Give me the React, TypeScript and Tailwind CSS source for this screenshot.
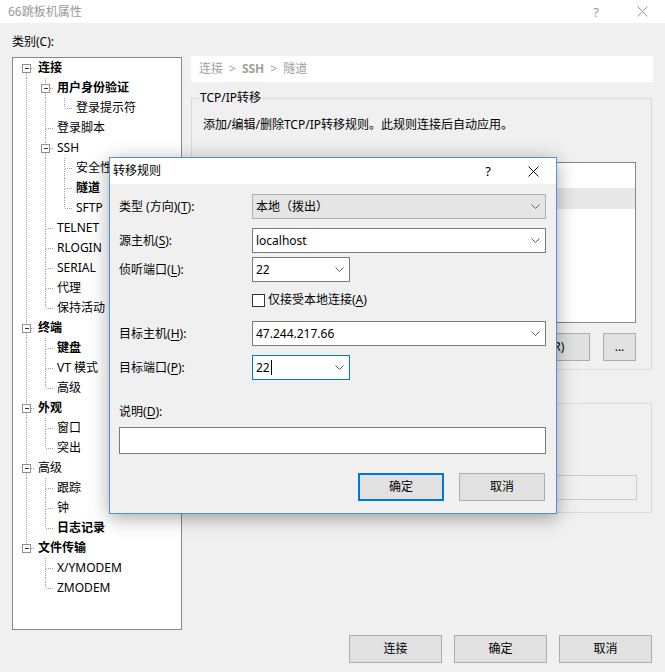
import React from "react";

type TreeNode = { label: string; bold?: boolean; children?: TreeNode[] };
type Row = { node: TreeNode; depth: number; guides: boolean[]; hasNext: boolean; first: boolean };

const tree: TreeNode[] = [
  {
    label: "连接",
    bold: true,
    children: [
      { label: "用户身份验证", bold: true, children: [{ label: "登录提示符" }] },
      { label: "登录脚本" },
      { label: "SSH", children: [{ label: "安全性" }, { label: "隧道", bold: true }, { label: "SFTP" }] },
      { label: "TELNET" },
      { label: "RLOGIN" },
      { label: "SERIAL" },
      { label: "代理" },
      { label: "保持活动" },
    ],
  },
  { label: "终端", bold: true, children: [{ label: "键盘", bold: true }, { label: "VT 模式" }, { label: "高级" }] },
  { label: "外观", bold: true, children: [{ label: "窗口" }, { label: "突出" }] },
  { label: "高级", children: [{ label: "跟踪" }, { label: "钟" }, { label: "日志记录", bold: true }] },
  { label: "文件传输", bold: true, children: [{ label: "X/YMODEM" }, { label: "ZMODEM" }] },
];

function flatten(nodes: TreeNode[], depth = 0, guides: boolean[] = [], out: Row[] = []) {
  nodes.forEach((n, i) => {
    const hasNext = i < nodes.length - 1;
    out.push({ node: n, depth, guides, hasNext, first: depth === 0 && i === 0 });
    if (n.children) flatten(n.children, depth + 1, [...guides, hasNext], out);
  });
  return out;
}

const dot = { stroke: "#a0a0a0", strokeDasharray: "1 1", shapeRendering: "crispEdges" as const };

function Guide({ on }: { on: boolean }) {
  return (
    <svg width="19" height="20" className="shrink-0">
      {on && <line x1="10.5" y1="0" x2="10.5" y2="20" {...dot} />}
    </svg>
  );
}

function Connector({ row }: { row: Row }) {
  const box = !!row.node.children;
  return (
    <svg width="19" height="20" className="shrink-0">
      {!row.first && <line x1="10.5" y1="0" x2="10.5" y2={box ? 6 : 10} {...dot} />}
      {row.hasNext && <line x1="10.5" y1={box ? 15 : 11} x2="10.5" y2="20" {...dot} />}
      <line x1={box ? 15 : 11} y1="10.5" x2="19" y2="10.5" {...dot} />
      {box && (
        <>
          <rect x="6.5" y="6.5" width="8" height="8" fill="#fff" stroke="#919191" shapeRendering="crispEdges" />
          <line x1="8.5" y1="10.5" x2="12.5" y2="10.5" stroke="#333" shapeRendering="crispEdges" />
        </>
      )}
    </svg>
  );
}

function Chevron() {
  return (
    <svg width="9" height="5" viewBox="0 0 9 5" className="shrink-0">
      <path d="M0.5 0.5 L4.5 4.5 L8.5 0.5" stroke="#606060" fill="none" />
    </svg>
  );
}

function Close({ color }: { color: string }) {
  return (
    <svg width="11" height="11" viewBox="0 0 11 11">
      <path d="M0.5 0.5 L10.5 10.5 M10.5 0.5 L0.5 10.5" stroke={color} strokeWidth="1" fill="none" />
    </svg>
  );
}

function Acc({ label, k }: { label: string; k: string }) {
  return (
    <span>
      {label}(<span className="underline underline-offset-2">{k}</span>):
    </span>
  );
}

function Combo({
  value,
  wide,
  grey,
  focus,
  caret,
}: {
  value: string;
  wide?: boolean;
  grey?: boolean;
  focus?: boolean;
  caret?: boolean;
}) {
  return (
    <div
      className={`flex h-[25px] items-center justify-between border pl-[3px] pr-[5px] ${wide ? "w-[294px]" : "w-[98px]"} ${
        grey ? "border-[#adadad] bg-[#e5e5e5]" : focus ? "border-[#0078d7] bg-white" : "border-[#7a7a7a] bg-white"
      }`}
    >
      <span className="flex items-center">
        {value}
        {caret && <span className="ml-[1px] inline-block h-[15px] w-px bg-black" />}
      </span>
      <Chevron />
    </div>
  );
}

function Btn({ label, w, primary }: { label: string; w: string; primary?: boolean }) {
  return (
    <div
      className={`flex h-[28px] items-center justify-center bg-[#e1e1e1] ${w} ${
        primary ? "border-2 border-[#0078d7]" : "border border-[#adadad]"
      }`}
    >
      {label}
    </div>
  );
}

export default function App() {
  const rows = flatten(tree);
  return (
    <div className="relative h-[672px] w-[665px] overflow-hidden bg-[#f0f0f0] font-['Noto_Sans','Noto_Sans_CJK_SC',sans-serif] text-[12px] leading-[16px] text-black">
      {/* main window title */}
      <div className="flex h-[23px] items-center bg-white">
        <span className="pl-[8px] text-[#999999]">66跳板机属性</span>
        <div className="ml-auto flex h-full">
          <div className="flex w-[46px] items-center justify-center text-[13px] text-[#999999]">?</div>
          <div className="flex w-[46px] items-center justify-center">
            <Close color="#999999" />
          </div>
        </div>
      </div>

      <div className="flex gap-[9px] px-[12px]">
        {/* category tree */}
        <div className="flex w-[170px] flex-col pt-[11px]">
          <div className="mb-[7px] h-[16px]">类别(C):</div>
          <div className="h-[573px] border border-[#828790] bg-white pl-[3px]">
            {rows.map((r, i) => (
              <div key={i} className="flex h-[20px] items-center whitespace-nowrap">
                {r.guides.map((g, j) => (
                  <Guide key={j} on={g} />
                ))}
                <Connector row={r} />
                <span className={`pl-[3px] leading-[20px] ${r.node.bold ? "font-bold" : ""}`}>{r.node.label}</span>
              </div>
            ))}
          </div>
        </div>

        {/* right page */}
        <div className="flex w-[462px] flex-col pt-[33px]">
          <div className="flex h-[26px] items-center bg-white pl-[8px] text-[#a0a0a0]">
            连接<span className="mx-[6px]">&gt;</span>
            <span className="font-bold">SSH</span>
            <span className="mx-[6px]">&gt;</span>隧道
          </div>

          <fieldset className="mt-[8px] w-[461px] border border-[#d9d9d9] pb-[8px] pl-[11px] pr-[15px]">
            <legend className="-ml-[4px] px-[1px]">TCP/IP转移</legend>
            <div className="mt-[11px] h-[16px]">添加/编辑/删除TCP/IP转移规则。此规则连接后自动应用。</div>
            <div className="mt-[29px] flex h-[161px] flex-col border border-[#828790] bg-white">
              <div className="h-[25px]" />
              <div className="h-[21px] bg-[#e8e8e8]" />
            </div>
            <div className="mt-[10px] flex justify-end gap-[13px]">
              <Btn label="添加(A)" w="w-[90px]" />
              <Btn label="编辑(E)" w="w-[90px]" />
              <Btn label="删除(R)" w="w-[90px]" />
              <Btn label="..." w="w-[33px]" />
            </div>
          </fieldset>

          <fieldset className="mt-[25px] w-[461px] border border-[#d9d9d9] pb-[12px] pl-[11px] pr-[14px]">
            <legend className="-ml-[4px] px-[1px]">X11转移</legend>
            <div className="mt-[8px] flex h-[16px] items-center gap-[4px]">
              <span className="inline-block h-[13px] w-[13px] border border-[#333] bg-white" />
              转发X11连接到(X):
            </div>
            <div className="mt-[40px] flex h-[25px] items-center">
              <span className="ml-[12px]">X DISPLAY:</span>
              <div className="ml-auto h-[25px] w-[300px] border border-[#cccccc] bg-[#f0f0f0]" />
            </div>
          </fieldset>
        </div>
      </div>

      <div className="mt-[5px] flex justify-end gap-[12px] pr-[13px]">
        <Btn label="连接" w="w-[93px]" />
        <Btn label="确定" w="w-[93px]" />
        <Btn label="取消" w="w-[93px]" />
      </div>

      {/* 转移规则 dialog */}
      <div className="absolute left-[109px] top-[157px] flex h-[357px] w-[448px] flex-col border border-[#4a93d4] bg-[#f0f0f0] shadow-[0_4px_18px_rgba(0,0,0,0.35)]">
        <div className="flex h-[26px] shrink-0 items-center bg-white">
          <span className="pl-[3px]">转移规则</span>
          <div className="ml-auto flex h-full">
            <div className="flex w-[44px] items-center justify-center text-[13px]">?</div>
            <div className="flex w-[46px] items-center justify-center">
              <Close color="#111111" />
            </div>
          </div>
        </div>

        <div className="flex flex-col pl-[9px]">
          <div className="mt-[10px] flex h-[25px] items-center">
            <div className="w-[133px]">
              类型 (方向)(<span className="underline underline-offset-2">T</span>):
            </div>
            <Combo value="本地（拨出）" wide grey />
          </div>
          <div className="mt-[9px] flex h-[25px] items-center">
            <div className="w-[133px]">
              <Acc label="源主机" k="S" />
            </div>
            <Combo value="localhost" wide />
          </div>
          <div className="mt-[4px] flex h-[25px] items-center">
            <div className="w-[133px]">
              <Acc label="侦听端口" k="L" />
            </div>
            <Combo value="22" />
          </div>
          <div className="mt-[8px] flex h-[20px] items-center pl-[133px]">
            <span className="inline-block h-[13px] w-[13px] border border-[#333333] bg-white" />
            <span className="ml-[3px]">
              仅接受本地连接(<span className="underline underline-offset-2">A</span>)
            </span>
          </div>
          <div className="mt-[11px] flex h-[25px] items-center">
            <div className="w-[133px]">
              <Acc label="目标主机" k="H" />
            </div>
            <Combo value="47.244.217.66" wide />
          </div>
          <div className="mt-[9px] flex h-[25px] items-center">
            <div className="w-[133px]">
              <Acc label="目标端口" k="P" />
            </div>
            <Combo value="22" focus caret />
          </div>
          <div className="mt-[24px] h-[16px]">
            <Acc label="说明" k="D" />
          </div>
          <div className="mt-[7px] h-[27px] w-[427px] border border-[#7a7a7a] bg-white" />
          <div className="mt-[19px] flex w-[426px] justify-end gap-[15px]">
            <Btn label="确定" w="w-[86px]" primary />
            <Btn label="取消" w="w-[86px]" />
          </div>
        </div>
      </div>
    </div>
  );
}
